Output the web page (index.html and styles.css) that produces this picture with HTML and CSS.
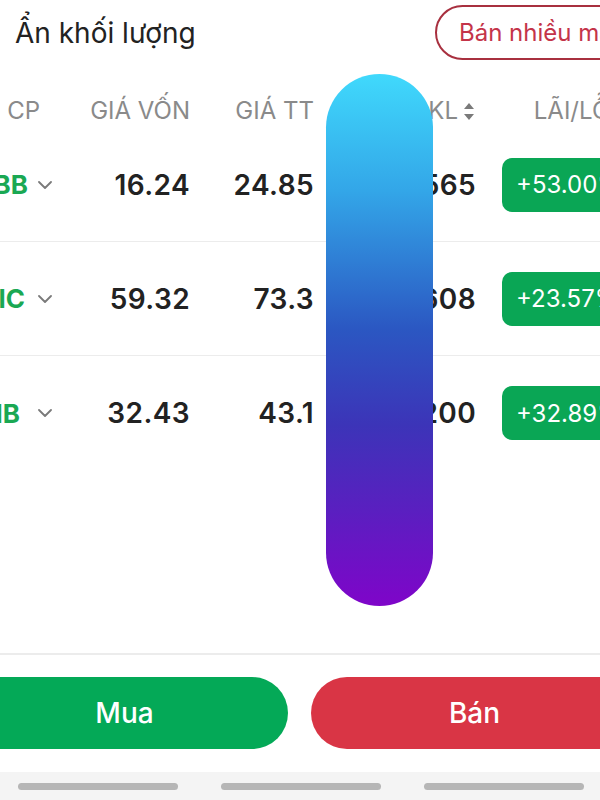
FILE: index.html
```html
<!DOCTYPE html>
<html lang="vi">
<head>
<meta charset="utf-8">
<title>Danh mục</title>
<link rel="stylesheet" href="styles.css">
</head>
<body>
<div class="screen">
  <div class="topbar">
    <span class="toggle-label">Ẩn khối lượng</span>
    <button class="outline-btn">Bán nhiều mã</button>
  </div>

  <div class="grid head">
    <div class="c1"><span class="tick-head">Mã CP</span></div>
    <div class="c2">GIÁ VỐN</div>
    <div class="c3">GIÁ TT</div>
    <div class="c4">KL <svg class="sort" viewBox="0 0 10 17" width="10" height="17"><path d="M5 0 L10 6 L0 6 Z M5 17 L10 11 L0 11 Z" fill="#7a7a7a"/></svg></div>
    <div class="c5"><span class="pl-head">LÃI/LỖ</span></div>
  </div>

  <div class="list">
    <div class="grid row">
      <div class="c1"><span class="ticker">MBB</span><svg class="chev" viewBox="0 0 14 8" width="14" height="8"><polyline points="1,1 7,7 13,1" fill="none" stroke="#7a7a7a" stroke-width="1.8" stroke-linecap="round" stroke-linejoin="round"/></svg></div>
      <div class="c2 num">16.24</div>
      <div class="c3 num">24.85</div>
      <div class="c4 num">1,565</div>
      <div class="c5"><span class="badge">+53.00%</span></div>
    </div>
    <div class="grid row">
      <div class="c1"><span class="ticker tk-mid">VIC</span><svg class="chev" viewBox="0 0 14 8" width="14" height="8"><polyline points="1,1 7,7 13,1" fill="none" stroke="#7a7a7a" stroke-width="1.8" stroke-linecap="round" stroke-linejoin="round"/></svg></div>
      <div class="c2 num">59.32</div>
      <div class="c3 num">73.3</div>
      <div class="c4 num">1,608</div>
      <div class="c5"><span class="badge">+23.57%</span></div>
    </div>
    <div class="grid row last">
      <div class="c1"><span class="ticker tk-short">VIB</span><svg class="chev" viewBox="0 0 14 8" width="14" height="8"><polyline points="1,1 7,7 13,1" fill="none" stroke="#7a7a7a" stroke-width="1.8" stroke-linecap="round" stroke-linejoin="round"/></svg></div>
      <div class="c2 num">32.43</div>
      <div class="c3 num">43.1</div>
      <div class="c4 num">1,200</div>
      <div class="c5"><span class="badge">+32.89%</span></div>
    </div>
  </div>

  <div class="actions">
    <button class="act buy">Mua</button>
    <button class="act sell">Bán</button>
  </div>

  <div class="tabbar">
    <span class="bar"></span>
    <span class="bar"></span>
    <span class="bar"></span>
  </div>
</div>
<div class="scroll-pill"></div>
</body>
</html>
```

FILE: styles.css
```css
html, body {
  margin: 0;
  padding: 0;
  width: 600px;
  height: 800px;
  overflow: hidden;
  background: #ffffff;
}

body {
  font-family: "Inter", "Roboto", "Liberation Sans", sans-serif;
  color: #222222;
  position: relative;
}

.screen {
  width: 720px;
  height: 800px;
  margin-left: -60px;
  display: flex;
  flex-direction: column;
}

.topbar {
  height: 66px;
  display: flex;
  align-items: center;
  justify-content: space-between;
  padding-left: 75px;
  box-sizing: border-box;
}

.toggle-label {
  font-size: 28px;
  color: #222;
}

.outline-btn {
  width: 225px;
  height: 55px;
  margin-top: -1px;
  border: 2px solid #a8303f;
  border-radius: 28px;
  background: #fff;
  color: #c43449;
  font-family: inherit;
  font-size: 24px;
  text-align: left;
  padding: 0 0 0 22px;
  white-space: nowrap;
}

.grid {
  display: grid;
  grid-template-columns: 120px 130px 124px 162px 184px;
  align-items: center;
}

.head {
  padding-top: 28px;
  height: 34px;
  line-height: 28px;
  font-size: 24px;
  color: #8a8a8a;
}

.head .c1 { text-align: right; padding-right: 20px; }
.head .c2, .head .c3 { text-align: right; }
.head .c4 {
  display: flex;
  justify-content: flex-end;
  align-items: center;
  gap: 6px;
  padding-right: 2px;
}
.head .c5 {
  display: flex;
  padding-left: 26px;
}
.pl-head {
  width: 140px;
  text-align: center;
  white-space: nowrap;
}

.sort { display: block; }

.list {
  flex: 1;
}

.row {
  height: 114px;
  box-sizing: border-box;
  border-bottom: 1px solid #ececec;
}
.row.last { border-bottom: none; }

.row .c1 {
  display: flex;
  align-items: center;
}

.ticker {
  width: 88px;
  box-sizing: border-box;
  text-align: right;
  color: #1aa853;
  font-weight: 700;
  font-size: 26px;
  white-space: nowrap;
}
.tk-mid { padding-right: 3px; }
.tk-short { padding-right: 8px; }

.chev {
  display: block;
  margin-left: 10px;
}

.num {
  text-align: right;
  font-size: 28px;
  font-weight: 600;
  letter-spacing: 0.4px;
  color: #222;
}

.row .c5 {
  padding-left: 26px;
}

.badge {
  display: inline-flex;
  align-items: center;
  height: 54px;
  border-radius: 10px;
  background: #0aa655;
  color: #ffffff;
  font-size: 24px;
  font-weight: 400;
  box-sizing: border-box;
  padding: 0 16px 0 14px;
  white-space: nowrap;
}

.actions {
  border-top: 2px solid #ececec;
  padding: 22px 0 23px 21px;
  display: flex;
  gap: 23px;
}

.act {
  width: 327px;
  height: 72px;
  border: none;
  border-radius: 36px;
  color: #fff;
  font-family: inherit;
  font-size: 28px;
  font-weight: 500;
}
.buy { background: #04a957; }
.sell { background: #d93545; }

.tabbar {
  height: 28px;
  background: #f4f4f4;
  display: flex;
  gap: 43px;
  padding: 11px 0 0 78px;
  box-sizing: border-box;
}

.bar {
  width: 160px;
  height: 7px;
  border-radius: 4px;
  background: #b6b6b6;
}

.scroll-pill {
  position: absolute;
  left: 326px;
  top: 74px;
  width: 107px;
  height: 532px;
  border-radius: 54px;
  background: linear-gradient(180deg, #40d9fc 0%, #33a6e8 22%, #2b57c2 48%, #3c34b8 66%, #5a1fc0 82%, #7f05c9 100%);
}
```
